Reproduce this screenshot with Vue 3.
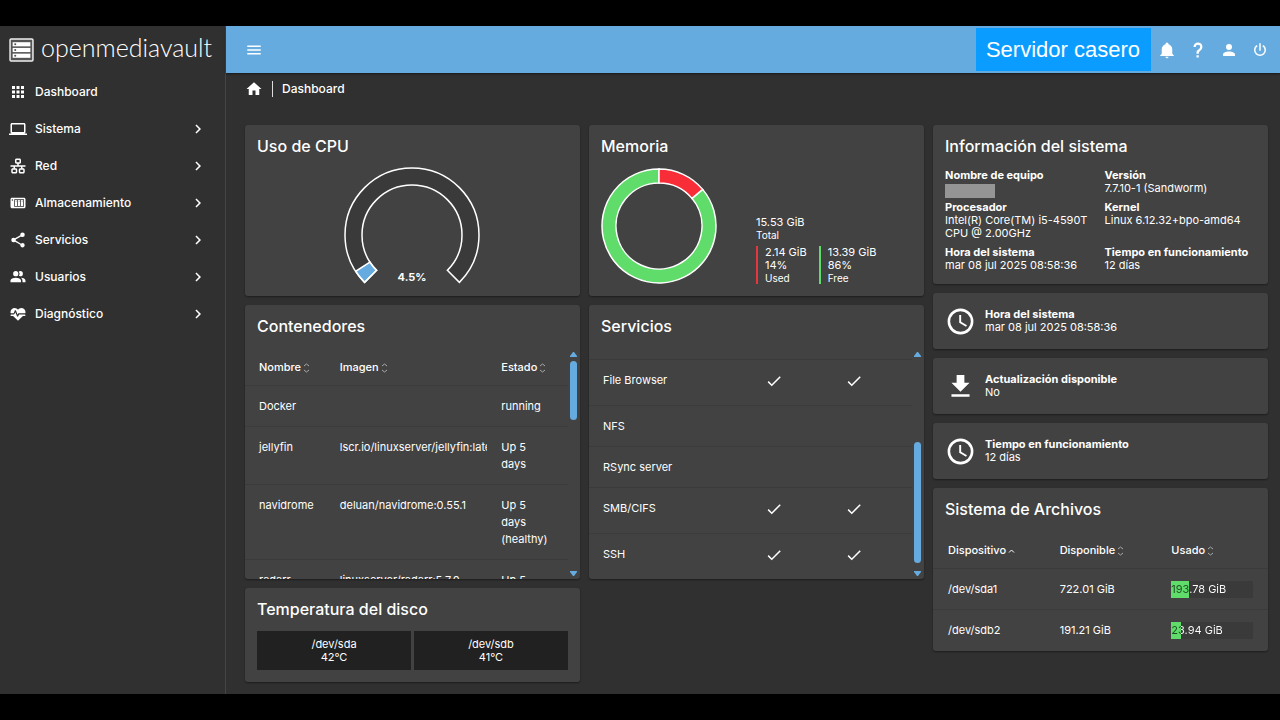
<script setup>
const navItems = [
  { label: 'Dashboard', icon: 'M4,4H8V8H4M10,4H14V8H10M16,4H20V8H16M4,10H8V14H4M10,10H14V14H10M16,10H20V14H16M4,16H8V20H4M10,16H14V20H10M16,16H20V20H16Z', group: false },
  { label: 'Sistema', icon: 'M4,6H20V16H4M20,18A2,2 0 0,0 22,16V6C22,4.89 21.1,4 20,4H4C2.89,4 2,4.89 2,6V16A2,2 0 0,0 4,18H0V20H24V18H20Z', group: true },
  { label: 'Red', icon: 'M10,2C8.89,2 8,2.89 8,4V7C8,8.11 8.89,9 10,9H11V11H2V13H6V15H5C3.89,15 3,15.89 3,17V20C3,21.11 3.89,22 5,22H9C10.11,22 11,21.11 11,20V17C11,15.89 10.11,15 9,15H8V13H16V15H15C13.89,15 13,15.89 13,17V20C13,21.11 13.89,22 15,22H19C20.11,22 21,21.11 21,20V17C21,15.89 20.11,15 19,15H18V13H22V11H13V9H14C15.11,9 16,8.11 16,7V4C16,2.89 15.11,2 14,2H10M10,4H14V7H10V4M5,17H9V20H5V17M15,17H19V20H15V17Z', group: true },
  { label: 'Almacenamiento', icon: 'M4,5C2.89,5 2,5.89 2,7V17C2,18.11 2.89,19 4,19H20C21.11,19 22,18.11 22,17V7C22,5.89 21.11,5 20,5H4M4.5,7A1,1 0 0,1 5.5,8A1,1 0 0,1 4.5,9A1,1 0 0,1 3.5,8A1,1 0 0,1 4.5,7M7,7H20V17H7V7M8,8V16H11V8H8M12,8V16H15V8H12M16,8V16H19V8H16M9,9H10V10H9V9M13,9H14V10H13V9M17,9H18V10H17V9Z', group: true },
  { label: 'Servicios', icon: 'M18,16.08C17.24,16.08 16.56,16.38 16.04,16.85L8.91,12.7C8.96,12.47 9,12.24 9,12C9,11.76 8.96,11.53 8.91,11.3L15.96,7.19C16.5,7.69 17.21,8 18,8A3,3 0 0,0 21,5A3,3 0 0,0 18,2A3,3 0 0,0 15,5C15,5.24 15.04,5.47 15.09,5.7L8.04,9.81C7.5,9.31 6.79,9 6,9A3,3 0 0,0 3,12A3,3 0 0,0 6,15C6.79,15 7.5,14.69 8.04,14.19L15.16,18.34C15.11,18.55 15.08,18.77 15.08,19C15.08,20.61 16.39,21.91 18,21.91C19.61,21.91 20.92,20.61 20.92,19A2.92,2.92 0 0,0 18,16.08Z', group: true },
  { label: 'Usuarios', icon: 'M16 17V19H2V17S2 13 9 13 16 17 16 17M12.5 7.5A3.5 3.5 0 1 0 9 11A3.5 3.5 0 0 0 12.5 7.5M15.94 13A5.32 5.32 0 0 1 18 17V19H22V17S22 13.37 15.94 13M15 4A3.39 3.39 0 0 0 13.07 4.59A5 5 0 0 1 13.07 10.41A3.39 3.39 0 0 0 15 11A3.5 3.5 0 0 0 15 4Z', group: true },
  { label: 'Diagnóstico', icon: 'M7.5,4A5.5,5.5 0 0,0 2,9.5C2,10 2.09,10.5 2.22,11H6.3L7.57,7.63C7.87,6.83 9.05,6.75 9.43,7.63L11.5,13L12.09,11.58C12.22,11.25 12.57,11 13,11H21.78C21.91,10.5 22,10 22,9.5A5.5,5.5 0 0,0 16.5,4C14.64,4 13,4.93 12,6.34C11,4.93 9.36,4 7.5,4M3,12.5A1,1 0 0,0 2,13.5A1,1 0 0,0 3,14.5H5.44L11,20C12,20.9 12,20.9 13,20L18.56,14.5H21A1,1 0 0,0 22,13.5A1,1 0 0,0 21,12.5H13.4L12.47,14.8C12.07,15.81 10.92,15.67 10.55,14.83L8.5,9.5L7.54,11.83C7.39,12.21 7.05,12.5 6.6,12.5H3Z', group: true },
]

const actions = [
  { label: 'Notificaciones', icon: 'M21,19V20H3V19L5,17V11C5,7.9 7.03,5.17 10,4.29C10,4.19 10,4.1 10,4A2,2 0 0,1 12,2A2,2 0 0,1 14,4C14,4.1 14,4.19 14,4.29C16.97,5.17 19,7.9 19,11V17L21,19M14,21A2,2 0 0,1 12,23A2,2 0 0,1 10,21' },
  { label: 'Ayuda', icon: 'M10,19H13V22H10V19M12,2C17.35,2.22 19.68,7.62 16.5,11.67C15.67,12.67 14.33,13.33 13.67,14.17C13,15 13,16 13,17H10C10,15.33 10,13.92 10.67,12.92C11.33,11.92 12.67,11.33 13.5,10.67C15.92,8.43 15.32,5.26 12,5A3,3 0 0,0 9,8H6A6,6 0 0,1 12,2Z' },
  { label: 'Usuario', icon: 'M12,4A4,4 0 0,1 16,8A4,4 0 0,1 12,12A4,4 0 0,1 8,8A4,4 0 0,1 12,4M12,14C16.42,14 20,15.79 20,18V20H4V18C4,15.79 7.58,14 12,14Z' },
  { label: 'Apagar', icon: 'M16.56,5.44L15.11,6.89C16.84,7.94 18,9.83 18,12A6,6 0 0,1 12,18A6,6 0 0,1 6,12C6,9.83 7.16,7.94 8.88,6.88L7.44,5.44C5.36,6.88 4,9.28 4,12A8,8 0 0,0 12,20A8,8 0 0,0 20,12C20,9.28 18.64,6.88 16.56,5.44M13,3H11V13H13' },
]

const containers = [
  { name: 'Docker', image: '', state: 'running' },
  { name: 'jellyfin', image: 'lscr.io/linuxserver/jellyfin:latest', state: 'Up 5\ndays' },
  { name: 'navidrome', image: 'deluan/navidrome:0.55.1', state: 'Up 5\ndays\n(healthy)' },
  { name: 'radarr', image: 'linuxserver/radarr:5.7.0', state: 'Up 5\ndays' },
]

const services = [
  { name: 'File Browser', on: true },
  { name: 'NFS', on: false },
  { name: 'RSync server', on: false },
  { name: 'SMB/CIFS', on: true },
  { name: 'SSH', on: true },
]

const clockIcon = 'M12,20A8,8 0 0,0 20,12A8,8 0 0,0 12,4A8,8 0 0,0 4,12A8,8 0 0,0 12,20M12,2A10,10 0 0,1 22,12A10,10 0 0,1 12,22A10,10 0 0,1 2,12A10,10 0 0,1 12,2M12.5,7V12.25L17,14.92L16.25,16.15L11,13V7H12.5Z'
const facts = [
  { title: 'Hora del sistema', value: 'mar 08 jul 2025 08:58:36', icon: clockIcon },
  { title: 'Actualización disponible', value: 'No', icon: 'M5,20H19V18H5M19,9H15V3H9V9H5L12,16L19,9Z' },
  { title: 'Tiempo en funcionamiento', value: '12 días', icon: clockIcon },
]

const filesystems = [
  { device: '/dev/sda1', free: '722.01 GiB', used: '193.78 GiB', percent: 22 },
  { device: '/dev/sdb2', free: '191.21 GiB', used: '23.94 GiB', percent: 12 },
]

const disks = [
  { device: '/dev/sda', temp: '42°C' },
  { device: '/dev/sdb', temp: '41°C' },
]

// Ring segment between two angles, in degrees clockwise from the top.
function arc(cx, cy, outer, inner, from, to) {
  const point = (r, deg) => {
    const a = ((deg - 90) * Math.PI) / 180
    return `${(cx + r * Math.cos(a)).toFixed(2)},${(cy + r * Math.sin(a)).toFixed(2)}`
  }
  const large = to - from > 180 ? 1 : 0
  return `M${point(outer, from)}A${outer},${outer} 0 ${large} 1 ${point(outer, to)}L${point(inner, to)}A${inner},${inner} 0 ${large} 0 ${point(inner, from)}Z`
}

const cpuStart = -135
const cpuValue = cpuStart + 270 * 0.045
const cpuTrack = arc(67, 68, 67, 50, cpuStart, 135)
const cpuFill = arc(67, 68, 67, 50, cpuStart, cpuValue)
const memUsed = arc(58, 58, 57, 43, 0, 50)
const memFree = arc(58, 58, 57, 43, 50, 360)
</script>

<template>
  <div class="screen">
    <div class="shell">
      <aside class="sidebar">
        <div class="brand">
          <svg class="brand-mark" viewBox="0 0 24 23" aria-hidden="true">
            <rect x="1" y="1" width="22" height="21" rx="1" fill="#555" stroke="#eee" stroke-width="1.4" />
            <g fill="#fff">
              <rect x="3.500" y="4" width="17" height="4" />
              <rect x="3.500" y="9.500" width="17" height="4" />
              <rect x="3.500" y="15" width="17" height="4" />
            </g>
            <g fill="#555">
              <circle cx="6" cy="6" r="1" />
              <circle cx="6" cy="11.500" r="1" />
              <circle cx="6" cy="17" r="1" />
            </g>
          </svg>
          <span class="brand-name">openmediavault</span>
        </div>
        <nav>
          <a v-for="item in navItems" :key="item.label" href="#" class="nav-item">
            <svg class="icon" viewBox="0 0 24 24" aria-hidden="true"><path fill-rule="evenodd" :d="item.icon" /></svg>
            <span class="nav-label">{{ item.label }}</span>
            <svg v-if="item.group" class="icon" viewBox="0 0 24 24" aria-hidden="true"><path d="M8.59,16.58L13.17,12L8.59,7.41L10,6L16,12L10,18L8.59,16.58Z" /></svg>
          </a>
        </nav>
      </aside>

      <div class="content">
        <header class="toolbar">
          <button class="icon-button" aria-label="Menú">
            <svg class="icon" viewBox="0 0 24 24" aria-hidden="true"><path d="M3,6H21V8H3V6M3,11H21V13H3V11M3,16H21V18H3V16Z" /></svg>
          </button>
          <span class="host">Servidor casero</span>
          <button v-for="action in actions" :key="action.label" class="icon-button" :aria-label="action.label">
            <svg class="icon" viewBox="0 0 24 24" aria-hidden="true"><path :d="action.icon" /></svg>
          </button>
        </header>

        <div class="breadcrumb">
          <a href="#" class="home" aria-label="Inicio">
            <svg class="icon" viewBox="0 0 24 24" aria-hidden="true"><path d="M10,20V14H14V20H19V12H22L12,3L2,12H5V20H10Z" /></svg>
          </a>
          <span class="crumb">Dashboard</span>
        </div>

        <main class="board">
          <div class="column">
            <section class="card chart-card">
              <h2>Uso de CPU</h2>
              <svg class="gauge" viewBox="0 0 136 118" role="img" aria-label="Uso de CPU">
                <path :d="cpuTrack" fill="#3a3a3a" />
                <path :d="cpuFill" fill="#66abdf" />
                <g fill="none" stroke="#fff" stroke-width="1.5">
                  <path :d="cpuTrack" />
                  <path :d="cpuFill" />
                </g>
                <text x="67" y="114" text-anchor="middle">4.5%</text>
              </svg>
            </section>

            <section class="card list-card">
              <h2>Contenedores</h2>
              <div class="viewport">
                <table class="grid halves">
                  <thead>
                    <tr>
                      <th v-for="head in ['Nombre', 'Imagen', 'Estado']" :key="head">
                        {{ head }}<svg class="sort" viewBox="0 0 7 10" aria-hidden="true"><path d="M1,3L3.500,1L6,3M1,7L3.500,9L6,7" /></svg>
                      </th>
                    </tr>
                  </thead>
                  <tbody>
                    <tr v-for="row in containers" :key="row.name">
                      <td>{{ row.name }}</td>
                      <td class="clip">{{ row.image }}</td>
                      <td class="lines">{{ row.state }}</td>
                    </tr>
                  </tbody>
                </table>
                <div class="scrollbar">
                  <svg viewBox="0 0 7 5" aria-hidden="true"><path d="M3,0H4L7,4V5H0V4Z" /></svg>
                  <div class="track"><div class="thumb short"></div></div>
                  <svg viewBox="0 0 7 5" aria-hidden="true"><path d="M0,0H7V1L4,5H3L0,1Z" /></svg>
                </div>
              </div>
            </section>

            <section class="card">
              <h2>Temperatura del disco</h2>
              <div class="disks">
                <div v-for="disk in disks" :key="disk.device" class="disk">
                  <div>{{ disk.device }}</div>
                  <div>{{ disk.temp }}</div>
                </div>
              </div>
            </section>
          </div>

          <div class="column">
            <section class="card chart-card">
              <h2>Memoria</h2>
              <div class="memory">
                <svg class="donut" viewBox="0 0 116 116" role="img" aria-label="Memoria">
                  <g stroke="#fff" stroke-width="1.5">
                    <path :d="memFree" fill="#5fdc6a" />
                    <path :d="memUsed" fill="#f82d38" />
                  </g>
                </svg>
                <div class="legend">
                  <div>15.53 GiB</div>
                  <div class="caption">Total</div>
                  <div class="parts">
                    <div class="part used">
                      <div>2.14 GiB</div>
                      <div>14%</div>
                      <div class="caption">Used</div>
                    </div>
                    <div class="part free">
                      <div>13.39 GiB</div>
                      <div>86%</div>
                      <div class="caption">Free</div>
                    </div>
                  </div>
                </div>
              </div>
            </section>

            <section class="card list-card">
              <h2>Servicios</h2>
              <div class="viewport">
                <div class="scrolled">
                  <table class="grid checks" aria-label="Servicios">
                    <tbody>
                      <tr v-for="row in services" :key="row.name">
                        <td>{{ row.name }}</td>
                        <td v-for="n in 2" :key="n">
                          <svg v-if="row.on" class="check" viewBox="0 0 24 24" aria-hidden="true"><path d="M21,7L9,19L3.500,13.500L4.910,12.090L9,16.170L19.590,5.590L21,7Z" /></svg>
                        </td>
                      </tr>
                    </tbody>
                  </table>
                </div>
                <div class="scrollbar">
                  <svg viewBox="0 0 7 5" aria-hidden="true"><path d="M3,0H4L7,4V5H0V4Z" /></svg>
                  <div class="track end"><div class="thumb long"></div></div>
                  <svg viewBox="0 0 7 5" aria-hidden="true"><path d="M0,0H7V1L4,5H3L0,1Z" /></svg>
                </div>
              </div>
            </section>
          </div>

          <div class="column">
            <section class="card">
              <h2>Información del sistema</h2>
              <dl class="info">
                <div><dt>Nombre de equipo</dt><dd><span class="redacted"></span></dd></div>
                <div><dt>Versión</dt><dd>7.7.10-1 (Sandworm)</dd></div>
                <div><dt>Procesador</dt><dd>Intel(R) Core(TM) i5-4590T CPU @ 2.00GHz</dd></div>
                <div><dt>Kernel</dt><dd>Linux 6.12.32+bpo-amd64</dd></div>
                <div><dt>Hora del sistema</dt><dd>mar 08 jul 2025 08:58:36</dd></div>
                <div><dt>Tiempo en funcionamiento</dt><dd>12 días</dd></div>
              </dl>
            </section>

            <section v-for="fact in facts" :key="fact.title" class="card fact">
              <svg class="fact-icon" viewBox="0 0 24 24" aria-hidden="true"><path :d="fact.icon" /></svg>
              <div>
                <div class="strong">{{ fact.title }}</div>
                <div>{{ fact.value }}</div>
              </div>
            </section>

            <section class="card">
              <h2>Sistema de Archivos</h2>
              <table class="grid thirds">
                <thead>
                  <tr>
                    <th>Dispositivo<svg class="sort sorted" viewBox="0 0 7 10" aria-hidden="true"><path d="M1,6.500L3.500,4L6,6.500" /></svg></th>
                    <th v-for="head in ['Disponible', 'Usado']" :key="head">
                      {{ head }}<svg class="sort" viewBox="0 0 7 10" aria-hidden="true"><path d="M1,3L3.500,1L6,3M1,7L3.500,9L6,7" /></svg>
                    </th>
                  </tr>
                </thead>
                <tbody>
                  <tr v-for="fs in filesystems" :key="fs.device">
                    <td>{{ fs.device }}</td>
                    <td>{{ fs.free }}</td>
                    <td>
                      <div class="meter" :style="{ '--fill': fs.percent + '%' }">
                        <span>{{ fs.used }}</span>
                      </div>
                    </td>
                  </tr>
                </tbody>
              </table>
            </section>
          </div>
        </main>
      </div>
    </div>
  </div>
</template>

<style>
body {
  background: #000;
}
</style>

<style scoped>
.screen {
  box-sizing: border-box;
  min-height: 100vh;
  padding: 26px 0;
  display: flex;
  background: #000;
  color: #fff;
  font-family: Inter, "Liberation Sans", sans-serif;
  font-size: 11px;
  line-height: 13px;
}

.shell {
  flex: 1;
  min-width: 0;
  display: flex;
  background: #303030;
}

.icon {
  display: block;
  flex: none;
  width: 18px;
  height: 18px;
  fill: currentColor;
}

.sidebar {
  flex: none;
  width: 225px;
  border-right: 1px solid #454545;
}

.brand {
  display: flex;
  align-items: center;
  gap: 7px;
  height: 47px;
  padding-left: 9px;
}

.brand-mark {
  width: 25px;
  height: 24px;
}

.brand-name {
  padding-bottom: 5px;
  font-family: Lato, sans-serif;
  font-size: 25px;
  font-weight: 300;
  line-height: 28px;
}

.nav-item {
  display: flex;
  align-items: center;
  height: 37px;
  padding: 0 18px 0 9px;
  color: #fff;
  font-size: 12px;
  font-weight: 500;
  text-decoration: none;
}

.nav-label {
  flex: 1;
  margin-left: 8px;
}

.content {
  flex: 1;
  min-width: 0;
}

.toolbar {
  display: flex;
  align-items: center;
  height: 47px;
  padding: 0 5px 0 12px;
  background: #66abdf;
  box-shadow: 0 1px 2px rgba(0, 0, 0, 0.5);
}

.icon-button {
  display: flex;
  align-items: center;
  justify-content: center;
  width: 31px;
  height: 31px;
  padding: 0;
  border: 0;
  background: none;
  color: #fff;
}

.host {
  margin-left: auto;
  padding: 0 11px 0 10px;
  background: #0a9dff;
  font-family: "Liberation Sans", Arial, sans-serif;
  font-size: 22px;
  line-height: 43px;
}

.breadcrumb {
  display: flex;
  align-items: center;
  height: 32px;
  padding-left: 19px;
  font-size: 12px;
  font-weight: 500;
}

.home {
  color: #fff;
}

.crumb {
  margin-left: 9px;
  padding-left: 9px;
  border-left: 1px solid #ddd;
  line-height: 16px;
}

.board {
  display: flex;
  align-items: flex-start;
  gap: 9px;
  padding: 20px 12px 12px 19px;
}

.column {
  flex: 1 1 0;
  min-width: 0;
  display: flex;
  flex-direction: column;
  gap: 9px;
}

.card {
  overflow: hidden;
  border-radius: 3px;
  background: #424242;
  box-shadow: 0 1px 2px rgba(0, 0, 0, 0.4);
}

h2 {
  margin: 0;
  padding: 0 12px;
  font-size: 16px;
  font-weight: 500;
  line-height: 42px;
}

.chart-card {
  height: 171px;
}

.gauge {
  display: block;
  width: 136px;
  height: 118px;
  margin: 0 auto;
  overflow: visible;
}

.gauge text {
  fill: #fff;
  font-size: 11px;
  font-weight: 700;
}

.memory {
  display: flex;
  align-items: flex-end;
  gap: 39px;
  padding: 1px 12px 0;
}

.donut {
  flex: none;
  width: 116px;
  height: 116px;
}

.caption {
  font-size: 10px;
  line-height: 12px;
}

.parts {
  display: flex;
  gap: 12px;
  margin-top: 5px;
}

.part {
  padding-left: 7px;
  border-left: 2px solid;
}

.part.used {
  border-color: #e5373f;
}

.part.free {
  border-color: #5fdc6a;
}

.list-card {
  height: 274px;
  display: flex;
  flex-direction: column;
}

.viewport {
  flex: 1;
  min-height: 0;
  display: flex;
  overflow: hidden;
}

.grid {
  flex: 1;
  width: 100%;
  table-layout: fixed;
  border-collapse: separate;
  border-spacing: 0;
  margin-top: 2px;
  line-height: 17px;
}

.halves,
.scrolled {
  min-width: 0;
  align-self: flex-start;
}

.scrolled {
  flex: 1;
  padding-top: 12px;
}

.grid th,
.grid td {
  box-sizing: border-box;
  padding: 12px 14px 11px;
  border-bottom: 1px solid #3b3b3b;
  text-align: left;
  vertical-align: top;
  font-weight: 400;
}

.grid th {
  padding-top: 10px;
  padding-right: 0;
  padding-bottom: 9px;
  font-weight: 500;
  white-space: nowrap;
}

.thirds th,
.grid.thirds td {
  padding-left: 15px;
  padding-right: 15px;
}

.halves th:nth-child(2),
.checks td:first-child {
  width: 50%;
}

.grid td.clip {
  padding-right: 0;
  overflow: hidden;
  white-space: nowrap;
}

.grid td.lines {
  padding-right: 0;
  white-space: pre-line;
}

.grid tbody tr:last-child td {
  border-bottom-color: transparent;
}

.checks {
  margin: 0;
  border-top: 1px solid #3b3b3b;
}

.check {
  display: block;
  width: 18px;
  height: 18px;
  margin-bottom: 4px;
  fill: #fff;
}

.sort {
  width: 7px;
  height: 10px;
  margin-left: 2px;
  vertical-align: -2px;
  fill: none;
  stroke: #aaa;
}

.sort.sorted {
  stroke: #fff;
}

.scrollbar {
  flex: none;
  display: flex;
  flex-direction: column;
  gap: 4px;
  width: 7px;
  padding: 5px 3px 3px 2px;
}

.scrollbar svg {
  display: block;
  width: 7px;
  height: 5px;
  fill: #66abdf;
}

.track {
  flex: 1;
  display: flex;
  flex-direction: column;
}

.track.end {
  justify-content: flex-end;
  padding-bottom: 4px;
}

.thumb {
  border-radius: 4px;
  background: #66abdf;
}

.thumb.short {
  height: 59px;
}

.thumb.long {
  height: 121px;
}

.disks {
  display: flex;
  gap: 3px;
  padding: 1px 12px 12px;
}

.disk {
  flex: 1;
  padding: 7px 0 6px;
  background: #212121;
  text-align: center;
}

.info {
  display: grid;
  grid-template-columns: 1fr 1fr;
  gap: 6px 8px;
  margin: 0;
  padding: 2px 12px 12px;
}

.info dt,
.strong {
  font-weight: 700;
}

.info dd {
  margin: 0;
}

.redacted {
  display: block;
  width: 50px;
  height: 14px;
  margin: 2px 0 -3px;
  background: #959595;
}

.fact {
  display: flex;
  align-items: center;
  gap: 9px;
  height: 56px;
  padding: 0 12px;
}

.fact-icon {
  flex: none;
  width: 31px;
  height: 31px;
  fill: #fff;
}

.meter {
  background: linear-gradient(to right, #5fdc6a var(--fill), #3a3a3a var(--fill));
}

.meter span {
  display: block;
  background: linear-gradient(to right, #1f4d23 var(--fill), #fff var(--fill));
  -webkit-background-clip: text;
  background-clip: text;
  color: transparent;
}
</style>
